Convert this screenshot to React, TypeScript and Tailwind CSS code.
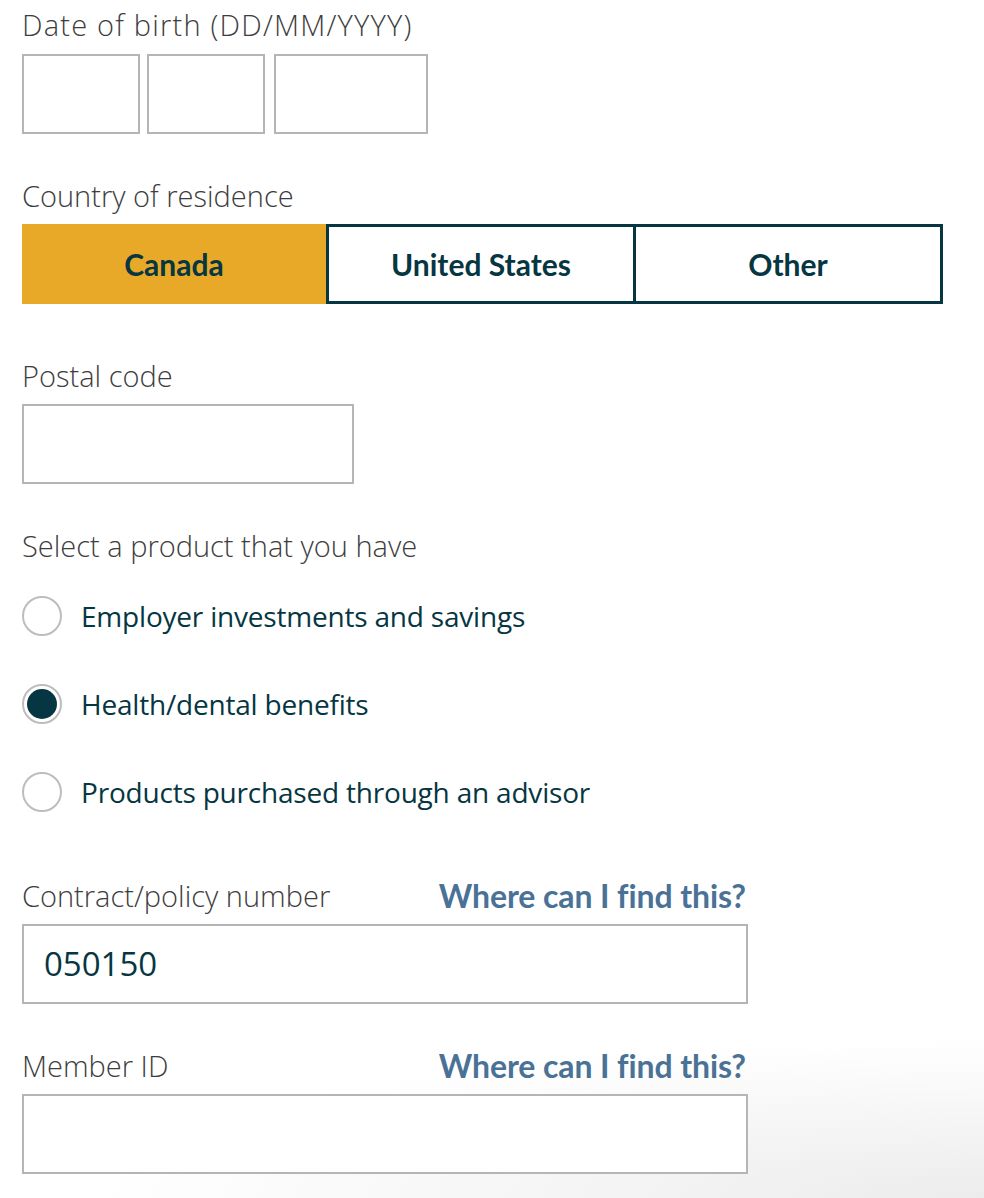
import React from "react";

const labelCls = "text-[29px] leading-[40px] font-light text-[#3d3d3d] font-['Open_Sans',sans-serif]";
const inputCls = "h-[80px] border-2 border-[#b5b5b5] bg-white";
const linkCls = "text-[32px] font-bold text-[#4a7196] leading-[40px] tracking-[-0.1px]";

function Radio({ checked, label }: { checked?: boolean; label: string }) {
  return (
    <div className="flex items-center h-[40px]">
      <div className="w-[40px] h-[40px] rounded-full border-2 border-[#bdbdbd] bg-white flex items-center justify-center shrink-0">
        {checked && <div className="w-[30px] h-[30px] rounded-full bg-[#063642]" />}
      </div>
      <span className="ml-[19px] text-[28px] tracking-[-0.2px] text-[#063642] font-['Open_Sans',sans-serif]">{label}</span>
    </div>
  );
}

export default function App() {
  return (
    <div
      className="w-[984px] h-[1198px] overflow-hidden bg-[radial-gradient(ellipse_900px_160px_at_100%_100%,#ececec_0%,#ffffff_100%)]"
      style={{ fontFamily: "Lato, 'Open Sans', sans-serif" }}
    >
      <div className="pl-[22px] pt-[5px] flex flex-col">
        <div className={`${labelCls} tracking-[1.2px]`}>Date of birth (DD/MM/YYYY)</div>
        <div className="mt-[9px] flex gap-[7px]">
          <div className={`${inputCls} w-[118px]`} />
          <div className={`${inputCls} w-[118px]`} />
          <div className={`${inputCls} w-[154px] ml-[2px]`} />
        </div>

        <div className={`${labelCls} mt-[42px]`}>Country of residence</div>
        <div className="mt-[8px] flex w-[921px] h-[80px] text-[30px] font-bold text-[#063642]">
          <div className="flex-1 bg-[#e8a928] flex items-center justify-center">Canada</div>
          <div className="flex-1 border-[3px] border-[#063642] flex items-center justify-center">United States</div>
          <div className="flex-1 border-[3px] border-l-0 border-[#063642] flex items-center justify-center">Other</div>
        </div>

        <div className={`${labelCls} mt-[52px]`}>Postal code</div>
        <div className={`${inputCls} w-[332px] mt-[8px]`} />

        <div className={`${labelCls} mt-[42px]`}>Select a product that you have</div>
        <div className="mt-[30px] flex flex-col gap-[48px]">
          <Radio label="Employer investments and savings" />
          <Radio checked label="Health/dental benefits" />
          <Radio label="Products purchased through an advisor" />
        </div>

        <div className="mt-[64px] w-[724px] flex justify-between items-center">
          <span className={labelCls}>Contract/policy number</span>
          <span className={linkCls}>Where can I find this?</span>
        </div>
        <div className={`${inputCls} w-[726px] mt-[8px] flex items-center pl-[20px] text-[33px] text-[#063642] font-['Open_Sans',sans-serif]`}>050150</div>

        <div className="mt-[42px] w-[724px] flex justify-between items-center">
          <span className={labelCls}>Member ID</span>
          <span className={linkCls}>Where can I find this?</span>
        </div>
        <div className={`${inputCls} w-[726px] mt-[8px] bg-transparent`} />
      </div>
    </div>
  );
}
